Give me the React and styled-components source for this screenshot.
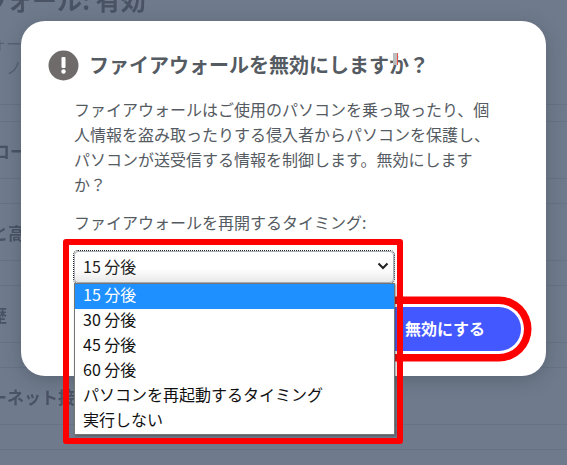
import styled, { createGlobalStyle } from 'styled-components';

const GlobalStyle = createGlobalStyle`
  html, body {
    margin: 0;
    padding: 0;
    height: 100%;
    overflow: hidden;
    background: #6f7b8c;
    font-family: "Noto Sans CJK JP", "Noto Sans", sans-serif;
  }
`;

const Screen = styled.div`
  position: relative;
  width: 567px;
  height: 465px;
  overflow: hidden;
  background: #6f7b8c;
`;

const Page = styled.div`
  display: flex;
  flex-direction: column;
  height: 465px;
  filter: blur(0.7px);
  color: #495364;
`;

const PageTitle = styled.h1`
  flex: none;
  height: 36px;
  margin: -19px 0 0 -118px;
  font-size: 25px;
  line-height: 36px;
  font-weight: 700;
  white-space: nowrap;
`;

const PageDesc = styled.p`
  flex: none;
  margin: 0 0 0 ${(p) => p.$shift}px;
  font-size: 16px;
  line-height: 24px;
  color: #566172;
  white-space: nowrap;
  &:first-of-type {
    margin-top: 14px;
  }
`;

const Group = styled.div`
  flex: none;
  height: 56px;
  display: flex;
  align-items: center;
  border-bottom: 1px solid #677384;
  font-size: 17px;
  font-weight: 700;
  white-space: nowrap;
`;

const Gap = styled.div`
  flex: none;
  height: 24px;
  border-bottom: 1px solid #677384;
`;

const Spacer = styled.div`
  flex: none;
  height: ${(p) => p.$h}px;
  border-bottom: 1px solid #677384;
`;

const RowText = styled.span`
  margin-left: ${(p) => p.$shift}px;
`;

const Dialog = styled.div`
  position: absolute;
  left: 21px;
  top: 21px;
  box-sizing: border-box;
  width: 525px;
  height: 355px;
  padding: 29px 25px 25px 27px;
  display: flex;
  flex-direction: column;
  background: #fff;
  border-radius: 24px;
  box-shadow: 0 4px 18px rgba(40, 48, 60, 0.3);
  color: #555b62;
`;

const Header = styled.div`
  position: relative;
  display: flex;
  align-items: center;
  gap: 10px;
  height: 30px;
`;

const Heading = styled.h2`
  margin: 0;
  font-size: 20px;
  font-weight: 700;
  line-height: 30px;
  white-space: nowrap;
`;

const Cursor = styled.span`
  position: absolute;
  left: 345px;
  top: 3px;
  width: 4px;
  height: 12px;
  background: #bdbdbd;
  border-right: 1px solid #f0504a;
`;

const Body = styled.div`
  margin: 17px 0 0 26px;
  width: 425px;
`;

const Text = styled.p`
  margin: 0;
  font-size: 16px;
  line-height: 25px;
`;

const Label = styled.label`
  display: block;
  margin-top: 13px;
  font-size: 16px;
  line-height: 25px;
`;

const SelectWrap = styled.div`
  position: relative;
  width: 320px;
  margin-top: 16px;
`;

const SelectBox = styled.div`
  box-sizing: border-box;
  height: 32px;
  display: flex;
  align-items: center;
  justify-content: space-between;
  padding: 0 4px 2px 8px;
  border: 1px solid #a9afb8;
  border-radius: 4px;
  background: linear-gradient(#ffffff 55%, #e9e9e9);
  outline: 1px dotted #222;
  font-size: 16px;
  color: #222;
`;

const Dropdown = styled.ul`
  position: absolute;
  z-index: 2;
  left: 0;
  top: 32px;
  width: 321px;
  box-sizing: border-box;
  margin: 0;
  padding: 0;
  list-style: none;
  background: #fff;
  border: 1px solid #767676;
  box-shadow: 1px 1px 2px rgba(60, 60, 60, 0.55);
`;

const Option = styled.li`
  height: 25px;
  padding-left: 8px;
  font-size: 16px;
  line-height: 21px;
  color: ${(p) => (p.$active ? '#fff' : '#111')};
  background: ${(p) => (p.$active ? '#1e90ff' : 'transparent')};
  white-space: nowrap;
`;

const Highlight = styled.div`
  position: absolute;
  z-index: 3;
  left: -11px;
  top: -12px;
  width: 340px;
  height: 205px;
  box-sizing: border-box;
  border: 6.5px solid #fe0000;
  border-radius: 3px;
  pointer-events: none;
`;

const Footer = styled.div`
  position: absolute;
  right: 25px;
  top: 286px;
`;

const ConfirmButton = styled.button`
  display: block;
  width: 152px;
  height: 44px;
  padding: 0 0 2px;
  border: none;
  border-radius: 22px;
  background: #4358ff;
  color: #fff;
  font-family: inherit;
  font-size: 16px;
  font-weight: 700;
  text-align: center;
  box-shadow: 0 0 0 3px #fff, 0 0 0 10.5px #fe0000;
`;

const options = ['15 分後', '30 分後', '45 分後', '60 分後', 'パソコンを再起動するタイミング', '実行しない'];

export default function App() {
  return (
    <Screen>
      <GlobalStyle />
      <Page>
        <PageTitle>ファイアウォール: 有効</PageTitle>
        <PageDesc $shift={-90}>ファイアウォールはご使用の</PageDesc>
        <PageDesc $shift={6}>ノ</PageDesc>
        <Spacer $h={25} />
        <Spacer $h={16} />
        <Group><RowText $shift={-7}>コード実行</RowText></Group>
        <Gap />
        <Group><RowText $shift={-9}>と高度な設定</RowText></Group>
        <Gap />
        <Group><RowText $shift={-27}>履歴</RowText></Group>
        <Gap />
        <Group><RowText $shift={-61}>インターネット接続</RowText></Group>
        <Gap />
      </Page>
      <Dialog>
        <Header>
          <svg width="31" height="31" viewBox="0 0 31 31">
            <circle cx="15.5" cy="15.5" r="15" fill="#6f6b6b" />
            <rect x="13.5" y="7" width="4" height="11" rx="1" fill="#fff" />
            <circle cx="15.5" cy="21.5" r="2.2" fill="#fff" />
          </svg>
          <Heading>ファイアウォールを無効にしますか？</Heading>
          <Cursor />
        </Header>
        <Body>
          <Text>
            ファイアウォールはご使用のパソコンを乗っ取ったり、個人情報を盗み取ったりする侵入者からパソコンを保護し、パソコンが送受信する情報を制御します。無効にしますか？
          </Text>
          <Label>ファイアウォールを再開するタイミング:</Label>
          <SelectWrap>
            <SelectBox>
              15 分後
              <svg width="12" height="8" viewBox="0 0 12 8" fill="none">
                <path d="M1.5 1.5 6 6l4.5-4.5" stroke="#222" strokeWidth="2" />
              </svg>
            </SelectBox>
            <Dropdown>
              {options.map((o, i) => (
                <Option key={o} $active={i === 0}>{o}</Option>
              ))}
            </Dropdown>
            <Highlight />
          </SelectWrap>
        </Body>
        <Footer>
          <ConfirmButton>無効にする</ConfirmButton>
        </Footer>
      </Dialog>
    </Screen>
  );
}
